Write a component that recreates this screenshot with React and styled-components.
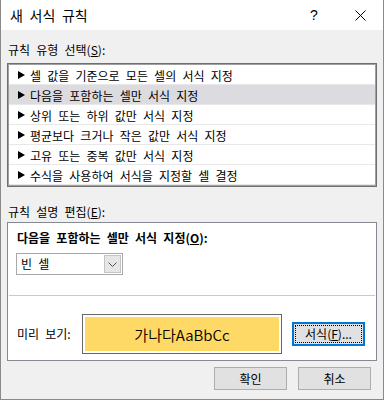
import React from "react";
import styled, { createGlobalStyle } from "styled-components";

const GlobalStyle = createGlobalStyle`
  html, body {
    margin: 0;
    padding: 0;
    background: #ffffff;
  }
  body {
    font-family: "Noto Sans CJK KR", "Noto Sans", sans-serif;
    font-size: 12px;
    color: #000;
    word-spacing: 3.5px;
  }
`;

const rules = [
  "셀 값을 기준으로 모든 셀의 서식 지정",
  "다음을 포함하는 셀만 서식 지정",
  "상위 또는 하위 값만 서식 지정",
  "평균보다 크거나 작은 값만 서식 지정",
  "고유 또는 중복 값만 서식 지정",
  "수식을 사용하여 서식을 지정할 셀 결정",
];

function Triangle() {
  return (
    <svg width="7" height="8" viewBox="0 0 7 8">
      <polygon points="0,0 7,4 0,8" fill="#000" />
    </svg>
  );
}

function Chevron() {
  return (
    <svg width="9" height="5" viewBox="0 0 9 5">
      <polyline points="0.5,0.5 4.5,4.5 8.5,0.5" fill="none" stroke="#555" strokeWidth="1" />
    </svg>
  );
}

function CloseIcon() {
  return (
    <svg width="11" height="11" viewBox="0 0 11 11">
      <line x1="0.5" y1="0.5" x2="10.5" y2="10.5" stroke="#000" strokeWidth="1" />
      <line x1="10.5" y1="0.5" x2="0.5" y2="10.5" stroke="#000" strokeWidth="1" />
    </svg>
  );
}

export default function App() {
  return (
    <>
      <GlobalStyle />
      <Window>
        <TitleBar>
          <Title>새 서식 규칙</Title>
          <TitleButtons>
            <Help>?</Help>
            <CloseBox>
              <CloseIcon />
            </CloseBox>
          </TitleButtons>
        </TitleBar>
        <Body>
          <SectionLabel>
            규칙 유형 선택(<u>S</u>):
          </SectionLabel>
          <RuleList>
            {rules.map((r, i) => (
              <RuleRow key={r} selected={i === 1}>
                <Triangle />
                <span>{r}</span>
              </RuleRow>
            ))}
          </RuleList>
          <SectionLabel $gap={17}>
            규칙 설명 편집(<u>E</u>):
          </SectionLabel>
          <Panel>
            <PanelTop>
              <BoldLabel>
                다음을 포함하는 셀만 서식 지정(<u>O</u>):
              </BoldLabel>
              <Combo>
                <ComboText>빈 셀</ComboText>
                <ComboButton>
                  <Chevron />
                </ComboButton>
              </Combo>
            </PanelTop>
            <Separator />
            <PreviewRow>
              <PreviewLabel>미리 보기:</PreviewLabel>
              <PreviewBox>
                <PreviewFill>가나다AaBbCc</PreviewFill>
              </PreviewBox>
              <FormatButton>
                <FocusRect>
                  서식(<u>F</u>)...
                </FocusRect>
              </FormatButton>
            </PreviewRow>
          </Panel>
          <ButtonRow>
            <DialogButton>확인</DialogButton>
            <DialogButton>취소</DialogButton>
          </ButtonRow>
        </Body>
      </Window>
    </>
  );
}

const Window = styled.div`
  width: 384px;
  height: 400px;
  box-sizing: border-box;
  border: 1px solid #8a8a8a;
  border-top: none;
  display: flex;
  flex-direction: column;
  background: #f0f0f0;
`;

const TitleBar = styled.div`
  height: 30px;
  background: #fff;
  display: flex;
  align-items: center;
  justify-content: space-between;
  padding-left: 9px;
`;

const Title = styled.div`
  font-size: 14px;
  line-height: 16px;
`;

const TitleButtons = styled.div`
  display: flex;
  align-items: center;
  height: 100%;
`;

const Help = styled.div`
  width: 46px;
  text-align: center;
  font-family: "Liberation Sans", sans-serif;
  font-size: 14px;
  padding-left: 3px;
`;

const CloseBox = styled.div`
  width: 46px;
  height: 100%;
  display: flex;
  align-items: center;
  justify-content: center;
`;

const Body = styled.div`
  flex: 1;
  display: flex;
  flex-direction: column;
  padding: 12px 6px 0 6px;
`;

const SectionLabel = styled.div`
  line-height: 16px;
  padding-left: 1px;
  margin-top: ${(p) => (p.$gap ? p.$gap : 0)}px;
`;

const RuleList = styled.div`
  margin-top: 5px;
  height: 124px;
  box-sizing: border-box;
  border: 1px solid #6f6f6f;
  box-shadow: inset 0 0 0 1px #a0a0a0;
  background: #fff;
  padding: 1px;
  display: flex;
  flex-direction: column;
`;

const RuleRow = styled.div`
  height: 20px;
  box-sizing: border-box;
  border-bottom: 1px solid #e8e8e8;
  display: flex;
  align-items: center;
  gap: 5px;
  padding-left: 9px;
  padding-top: 1px;
  background: ${(p) => (p.selected ? "#dcdce0" : "#fff")};
  white-space: nowrap;
`;

const Panel = styled.div`
  margin-top: 2px;
  height: 139px;
  box-sizing: border-box;
  border: 1px solid #858a92;
  background: #fff;
  display: flex;
  flex-direction: column;
`;

const PanelTop = styled.div`
  padding: 7px 0 0 8px;
  display: flex;
  flex-direction: column;
  align-items: flex-start;
`;

const BoldLabel = styled.div`
  font-weight: bold;
  line-height: 16px;
  padding-left: 1px;
`;

const Combo = styled.div`
  margin-top: 7px;
  width: 107px;
  height: 22px;
  box-sizing: border-box;
  border: 1px solid #a9a9a9;
  display: flex;
  align-items: stretch;
  background: #fff;
`;

const ComboText = styled.div`
  flex: 1;
  padding-left: 4px;
  line-height: 20px;
`;

const ComboButton = styled.div`
  width: 17px;
  margin: 1px;
  box-sizing: border-box;
  border: 1px solid #c4c4c4;
  background: #e6e6e6;
  display: flex;
  align-items: center;
  justify-content: center;
`;

const Separator = styled.div`
  margin: 20px 1px 0 1px;
  height: 1px;
  background: #c9c9c9;
`;

const PreviewRow = styled.div`
  margin-top: 18px;
  display: flex;
  align-items: center;
`;

const PreviewLabel = styled.div`
  width: 65px;
  padding-left: 9px;
  line-height: 16px;
`;

const PreviewBox = styled.div`
  width: 200px;
  height: 40px;
  box-sizing: border-box;
  border: 1px solid #666;
  padding: 2px;
  background: #fff;
`;

const PreviewFill = styled.div`
  height: 100%;
  background: #fed966;
  display: flex;
  align-items: center;
  justify-content: center;
  font-size: 15px;
  font-weight: 350;
  color: #000;
  word-spacing: normal;
`;

const FormatButton = styled.div`
  margin-left: 10px;
  width: 73px;
  height: 24px;
  box-sizing: border-box;
  border: 2px solid #0078d7;
  background: #e1e1e1;
  padding: 1px;
  display: flex;
`;

const FocusRect = styled.div`
  flex: 1;
  border: 1px dotted #000;
  display: flex;
  align-items: center;
  justify-content: center;
  line-height: 14px;
`;

const ButtonRow = styled.div`
  margin-top: 6px;
  display: flex;
  justify-content: flex-end;
  gap: 11px;
  padding-right: 6px;
`;

const DialogButton = styled.div`
  width: 73px;
  height: 23px;
  box-sizing: border-box;
  border: 1px solid #adadad;
  background: #e1e1e1;
  display: flex;
  align-items: center;
  justify-content: center;
`;
